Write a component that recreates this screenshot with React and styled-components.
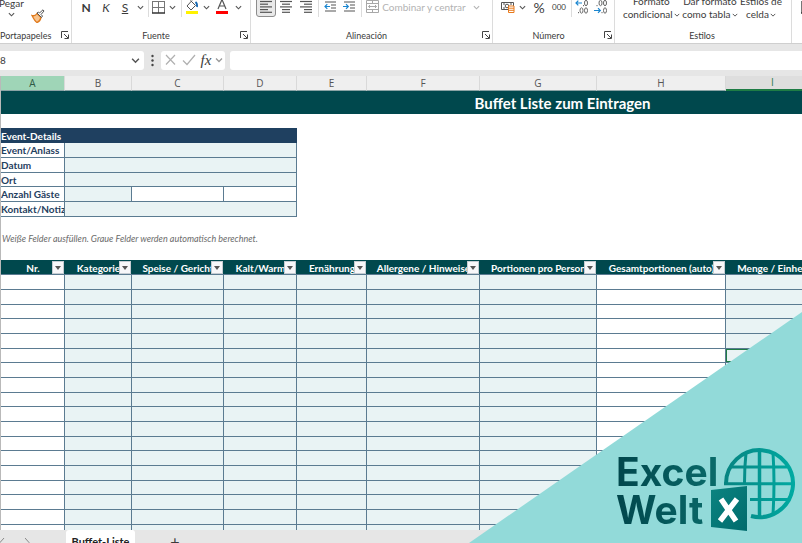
import React from 'react';
import styled, { createGlobalStyle, css } from 'styled-components';

const colors = {
  petrol: '#00484d',
  navy: '#1f4060',
  line: '#5b7b91',
  input: '#e9f3f4',
  chrome: '#e6e6e6',
  text: '#3b3b3b',
  green: '#1e7c45',
  mint: '#92dad9',
};

const GlobalStyle = createGlobalStyle`
  * { box-sizing: border-box; }
  body { margin: 0; overflow: hidden; }
  button, input { font: inherit; color: inherit; border: 0; padding: 0; background: none; }
`;

const Page = styled.div`
  position: relative;
  display: flex;
  flex-direction: column;
  height: 100vh;
  overflow: hidden;
  background: #fff;
  color: ${colors.text};
  font-family: Lato, 'Open Sans', sans-serif;
  font-size: 9px;
`;

/* Ribbon */

const Ribbon = styled.header`
  display: flex;
  align-items: flex-end;
  height: 44px;
  flex: none;
  overflow: hidden;
  background: #fff;
  border-bottom: 1px solid #cfcfcf;
`;

const Group = styled.section`
  display: flex;
  flex-direction: column;
  justify-content: flex-end;
  flex: ${({ $width }) => ($width ? `0 0 ${$width}px` : '1')};
  height: 60px;
  padding-bottom: 1px;
  border-right: 1px solid #dcdcdc;
`;

const Tools = styled.div`
  display: flex;
  align-items: center;
  height: 20px;
  margin-bottom: 11px;
  padding-left: ${({ $left = 4 }) => $left}px;
`;

const Tool = styled.button`
  display: flex;
  align-items: center;
  justify-content: center;
  flex: none;
  width: ${({ $width = 20 }) => $width}px;
  height: 20px;
  gap: 3px;
  font-size: ${({ $size = 12 }) => $size}px;
  white-space: nowrap;
  ${({ $active }) => $active && css`
    background: #e9e9e9;
    border: 1px solid #8d8d8d;
    border-radius: 3px;
  `}
  ${({ disabled }) => disabled && 'color: #b3b3b3;'}
`;

const Divider = styled.span`
  width: 1px;
  height: 20px;
  margin: 0 2px;
  background: #dcdcdc;
`;

const GroupFooter = styled.div`
  display: flex;
  align-items: center;
  height: 14px;
  padding-right: 2px;
`;

const GroupLabel = styled.span`
  flex: 1;
  text-align: ${({ $align = 'center' }) => $align};
  white-space: nowrap;
`;

const Launcher = styled.button`
  display: flex;
  width: 8px;
  height: 8px;
`;

const PasteTools = styled.div`
  display: flex;
  align-items: flex-end;
  gap: 8px;
  margin-bottom: 2px;
`;

const PasteButton = styled.button`
  display: flex;
  flex-direction: column;
  align-items: center;
  gap: 2px;
  width: 23px;
  font-size: 10px;
  line-height: 12px;
  padding-bottom: 8px;
`;

const IconStack = styled.div`
  display: flex;
  flex-direction: column;
`;

const StyleTools = styled.div`
  display: flex;
  justify-content: space-between;
  margin-bottom: 7px;
  padding: 0 9px 0 8px;
`;

const StyleButton = styled.button`
  font-size: 10px;
  line-height: 13px;
  white-space: nowrap;
  text-align: center;

  svg { margin-left: 1px; }
`;

/* Formula bar */

const FormulaBar = styled.div`
  display: flex;
  align-items: center;
  flex: none;
  height: 32px;
  background: ${colors.chrome};
`;

const WhiteBox = styled.div`
  display: flex;
  align-items: center;
  justify-content: space-between;
  width: ${({ $width }) => $width}px;
  height: 19px;
  padding-right: ${({ $pad = 2 }) => $pad}px;
  background: #fff;
  border-radius: ${({ $radius = '3px' }) => $radius};
`;

const NameInput = styled.input`
  width: 100px;
  font-size: 10px;
`;

const FormulaInput = styled.input`
  flex: 1;
  min-width: 0;
  height: 19px;
  margin-left: 5px;
  background: #fff;
  border-radius: 3px 0 0 3px;
`;

const FxLabel = styled.button`
  font: italic 15px 'Liberation Serif', serif;
`;

/* Sheet */

const SheetArea = styled.main`
  flex: 1;
  min-height: 0;
  overflow: hidden;
  border-left: 1px solid #b9b9b9;
`;

const Sheet = styled.table`
  table-layout: fixed;
  width: max(100%, 1123px);
  border-collapse: separate;
  border-spacing: 0;
  font-size: 10px;
  line-height: 12px;
  color: ${colors.navy};

  td, th { padding: 0; overflow: hidden; white-space: nowrap; }
`;

const Letter = styled.th`
  height: 15px;
  font: 10px/13px 'Open Sans', sans-serif;
  color: #555;
  background: #efefef;
  border-right: 1px solid #d9d9d9;
  border-bottom: 1px solid #8aa3a5;
  ${({ $tone }) => $tone === 'row' && 'background: #9fd5b7; color: #2f5a45;'}
  ${({ $tone }) => $tone === 'active' && `
    background: #dedede;
    color: ${colors.green};
    border-bottom: 2px solid ${colors.green};
  `}
`;

const Title = styled.td`
  height: 23px;
  background: ${colors.petrol};
  color: #fff;
  font-size: 15px;
  font-weight: 700;
  line-height: 20px;
  text-align: center;
`;

const Spacer = styled.td`
  height: ${({ $height }) => $height}px;
`;

const EventHead = styled.th`
  height: 15px;
  background: ${colors.navy};
  color: #fff;
  text-align: left;
`;

const rowHeight = ({ $index }) => ($index % 3 === 2 ? 14 : 15);

const EventLabel = styled.th`
  height: ${rowHeight}px;
  text-align: left;
  border-right: 1px solid ${colors.line};
  border-bottom: 1px solid ${colors.line};
`;

const Cell = styled.td`
  height: ${rowHeight}px;
  background: ${({ $filled }) => ($filled ? colors.input : '#fff')};
  border-right: 1px solid ${colors.line};
  border-bottom: 1px solid ${colors.line};
  ${({ $active }) => $active && `box-shadow: inset 1px 1px ${colors.green}, inset 0 -1px ${colors.green};`}
`;

const Note = styled.td`
  height: 15px;
  padding-left: 1px !important;
  font-size: 9px;
  font-style: italic;
  color: #6b6b6b;
`;

const HeadCell = styled.th`
  position: relative;
  height: 15px;
  background: ${colors.petrol};
  color: #fff;
  border-bottom: 1px solid ${colors.line};
`;

const HeadText = styled.div`
  display: flex;
  justify-content: center;
  padding-top: 1px;
`;

const FilterButton = styled.button`
  position: absolute;
  top: 1px;
  right: 1px;
  display: flex;
  align-items: center;
  justify-content: center;
  width: 12px;
  height: 13px;
  background: #f7f7f9;
  border: 1px solid #c5ccd2;
`;

/* Sheet tabs */

const TabBar = styled.nav`
  display: flex;
  flex: none;
  height: 13px;
  overflow: hidden;
  background: ${colors.chrome};
`;

const TabArrows = styled.div`
  display: flex;
  justify-content: space-between;
  width: 66px;
  padding: 8px 36px 0 0;
`;

const Tab = styled.button`
  width: 69px;
  height: 24px;
  background: #fff;
  border-radius: 3px 3px 0 0;
  font: 700 11px/22px Lato, sans-serif;
  color: #222;
`;

const AddTab = styled.button`
  width: 80px;
  height: 22px;
  line-height: 22px;
  font-size: 16px;
`;

/* Brand corner */

const Corner = styled.aside`
  position: absolute;
  right: 0;
  bottom: 0;
  width: 333px;
  height: 231px;
  background: ${colors.mint};
  clip-path: polygon(100% 0, 100% 100%, 0 100%);
`;

const Brand = styled.div`
  position: absolute;
  right: 6px;
  bottom: 11px;
  display: flex;
`;

const BrandName = styled.div`
  position: absolute;
  right: 76px;
  bottom: 3px;
  width: 104px;
  font: 700 39px/38px Inter, sans-serif;
  color: transparent;
  background: linear-gradient(90deg, #00464c, #0a6c6b);
  background-clip: text;
`;

const Chevron = ({ size = 7, color = '#555' }) => (
  <svg width={size} height={size} viewBox="0 0 8 8" fill="none" stroke={color} strokeWidth="1.3">
    <path d="M1 2.5l3 3 3-3" />
  </svg>
);

const LauncherIcon = () => (
  <svg width="8" height="8" viewBox="0 0 8 8" fill="none" stroke="#444">
    <path d="M.5 7V.5H7M3 3l4 4M7.5 3.5v4h-4" />
  </svg>
);

const LinesIcon = ({ rows }) => (
  <svg width="14" height="14" viewBox="0 0 14 14" stroke="#555" strokeWidth="1.2">
    {rows.map(([x1, x2], i) => (
      <path key={i} d={`M${x1} ${1.5 + i * 2.7}H${x2}`} />
    ))}
  </svg>
);

const IndentIcon = ({ flip }) => (
  <svg width="13" height="14" viewBox="0 0 13 14" fill="none" stroke="#555" strokeWidth="1.2">
    <path d="M1 2h11M7 5h5M7 8h5M1 11h11" />
    <path d={flip ? 'M0 6.5h5M3 4.2l2.3 2.3L3 8.8' : 'M1 6.5h5M3.3 4.2L1 6.5l2.3 2.3'} stroke="#1a86d0" />
  </svg>
);

const BordersIcon = () => (
  <svg width="13" height="13" viewBox="0 0 13 13" fill="none" stroke="#777">
    <path d="M.5 0v12M12.5 0v12M6.5 0v12M0 .5h13M0 6.5h13" />
    <path d="M0 12h13" stroke="#333" strokeWidth="1.5" />
  </svg>
);

const FillIcon = () => (
  <svg width="14" height="16" viewBox="0 0 14 16" fill="none" stroke="#555">
    <path d="M5.5 1.5l5 5-4.5 4.5-4-4 5-5.5" />
    <path d="M10.5 3q2 1.5 1.5 5" stroke="#1769b3" strokeWidth="1.8" />
    <path d="M1 13.500h12" stroke="#fff200" strokeWidth="3" />
  </svg>
);

const FontColorIcon = () => (
  <svg width="14" height="16" viewBox="0 0 14 16" fill="none" stroke="#555">
    <path d="M3 10L7 .5 11 10M4.3 7h5.4" strokeWidth="1.2" />
    <path d="M1 13.5h12" stroke="#f00" strokeWidth="3" />
  </svg>
);

const MergeIcon = () => (
  <svg width="13" height="14" viewBox="0 0 13 14" fill="none" stroke="#a8a8a8">
    <path d="M.5.5h12v12H.5zM.5 3.5h12M.5 9.5h12M6.5.5v3M6.5 9.5v3M2.5 6.5h8M4 5L2.5 6.5 4 8M9 5l1.5 1.5L9 8" />
  </svg>
);

const CurrencyIcon = () => (
  <svg width="14" height="14" viewBox="0 0 14 14" fill="none" stroke="#555">
    <path d="M.5 2.5h12v7H.5z" />
    <circle cx="6" cy="6" r="1.8" />
    <path d="M2 4h2M2 8h2M9 4h2" />
    <path d="M7.5 6h5.5v6.5H7.5z" fill="#fff" stroke="#e87a1d" />
    <path d="M7.5 8.2h5.5M7.5 10.3h5.5" stroke="#e87a1d" />
  </svg>
);

const DecimalIcon = ({ less }) => (
  <svg width="14" height="16" viewBox="0 0 14 16" fill="none" stroke="#666">
    <ellipse cx="11" cy="4" rx="1.5" ry="2.7" />
    <ellipse cx="11" cy="11.5" rx="1.5" ry="2.7" />
    <ellipse cx="6.5" cy={less ? 4 : 11.5} rx="1.5" ry="2.7" />
    <path d={less ? 'M3 6v1.2M8 13v1.2' : 'M3.5 13v1.2M8.5 6v1.2'} />
    <path
      d={less ? 'M0 11.5h6M4 9.2l2.3 2.3L4 13.8' : 'M1 4h6M3.3 1.7L1 4l2.3 2.3'}
      stroke="#1a86d0"
      strokeWidth="1.2"
    />
  </svg>
);

const CopyIcon = () => (
  <svg width="14" height="10" viewBox="0 0 14 10" fill="none" stroke="#555">
    <path d="M2 0v5h3M5.5 0v7.5h6V0" />
  </svg>
);

const BrushIcon = () => (
  <svg width="14" height="14" viewBox="0 0 14 14" fill="none" stroke="#555">
    <path d="M1 6.5q3 1 5-2l4 4q-1 4-4 5-2-1-5-7z" fill="#f9c48d" stroke="#e07a1c" strokeWidth="1.3" />
    <path d="M6 4l4.5 4.5 1-1.5L10 5.5 13 2 12 .8 8.5 4 7.5 3z" fill="#fff" />
  </svg>
);

const Globe = () => (
  <svg width="88" height="86" viewBox="0 0 88 86" fill="none">
    <defs>
      <linearGradient id="globe" gradientUnits="userSpaceOnUse" x1="16" x2="87" y1="0" y2="0">
        <stop offset="0" stopColor="#078481" />
        <stop offset="1" stopColor="#00aaa2" />
      </linearGradient>
      <linearGradient id="tile" x1="0" x2="1" y1="0" y2="1">
        <stop offset="0" stopColor="#0b8481" />
        <stop offset="1" stopColor="#006b6c" />
      </linearGradient>
    </defs>
    <g stroke="url(#globe)" strokeWidth="3">
      <path d="M18 38A33.5 33.5 0 1 1 43 70" strokeWidth="4" />
      <path d="M24 21h55M16 37.8h69M42 53.500h40" />
      <path d="M38 7q-1.500 14-1.500 30M65 7q1 15 1 30t-1 31" />
      <path d="M51.5 4v68" strokeWidth="3.5" />
    </g>
    <path d="M3 44l36-4v45l-36-4z" fill="url(#tile)" />
    <path d="M13 53l15 22M29 53L12 75" stroke="#fff" strokeWidth="5.5" />
  </svg>
);

const columns = [
  { letter: 'A', width: 64, head: 'Nr.' },
  { letter: 'B', width: 67, head: 'Kategorie', filled: true },
  { letter: 'C', width: 92, head: 'Speise / Gericht', filled: true },
  { letter: 'D', width: 73, head: 'Kalt/Warm', filled: true },
  { letter: 'E', width: 70, head: 'Ernährung', filled: true },
  { letter: 'F', width: 113, head: 'Allergene / Hinweise', filled: true },
  { letter: 'G', width: 117, head: 'Portionen pro Person', filled: true },
  { letter: 'H', width: 129, head: 'Gesamtportionen (auto)' },
  { letter: 'I', width: 94, head: 'Menge / Einheit', filled: true },
];

const eventFields = ['Event/Anlass', 'Datum', 'Ort', 'Anzahl Gäste', 'Kontakt/Notiz'];
const bodyRows = Array.from({ length: 18 }, (_, i) => i);
const ACTIVE_ROW = 5;

const ALIGN_LEFT = [[1, 13], [1, 9], [1, 13], [1, 9], [1, 13]];
const ALIGN_CENTER = [[1, 13], [3, 11], [1, 13], [3, 11], [3, 11]];
const ALIGN_RIGHT = [[1, 13], [5, 13], [1, 13], [5, 13], [5, 13]];

const Footer = ({ label, align, launcher = true }) => (
  <GroupFooter>
    <GroupLabel $align={align}>{label}</GroupLabel>
    {launcher && <Launcher aria-label={label}><LauncherIcon /></Launcher>}
  </GroupFooter>
);

const ChevronTool = ({ width = 12 }) => (
  <Tool $width={width} aria-label="Más"><Chevron /></Tool>
);

const RibbonBar = () => (
  <Ribbon>
    <Group $width={72}>
      <PasteTools>
        <PasteButton>Pegar<Chevron /></PasteButton>
        <IconStack>
          <Tool $width={14} aria-label="Copiar"><CopyIcon /></Tool>
          <Tool $width={14} aria-label="Copiar formato"><BrushIcon /></Tool>
        </IconStack>
      </PasteTools>
      <Footer label="Portapapeles" align="left" />
    </Group>
    <Group $width={179}>
      <Tools>
        <Tool><b>N</b></Tool>
        <Tool><i>K</i></Tool>
        <Tool $width={18}><u>S</u></Tool>
        <ChevronTool />
        <Divider />
        <Tool $width={14} aria-label="Bordes"><BordersIcon /></Tool>
        <ChevronTool width={14} />
        <Divider />
        <Tool $width={16} aria-label="Color de relleno"><FillIcon /></Tool>
        <ChevronTool />
        <Tool aria-label="Color de fuente"><FontColorIcon /></Tool>
        <ChevronTool />
      </Tools>
      <Footer label="Fuente" />
    </Group>
    <Group $width={242}>
      <Tools $left={5}>
        <Tool $active aria-label="Izquierda"><LinesIcon rows={ALIGN_LEFT} /></Tool>
        <Tool aria-label="Centrar"><LinesIcon rows={ALIGN_CENTER} /></Tool>
        <Tool aria-label="Derecha"><LinesIcon rows={ALIGN_RIGHT} /></Tool>
        <Divider />
        <Tool $width={18} aria-label="Disminuir sangría"><IndentIcon /></Tool>
        <Tool aria-label="Aumentar sangría"><IndentIcon flip /></Tool>
        <Divider />
        <Tool $width={104} $size={10} disabled><MergeIcon />Combinar y centrar</Tool>
        <Tool $width={16} disabled aria-label="Más"><Chevron color="#b3b3b3" /></Tool>
      </Tools>
      <Footer label="Alineación" />
    </Group>
    <Group $width={122}>
      <Tools $left={8}>
        <Tool $width={14} aria-label="Moneda"><CurrencyIcon /></Tool>
        <ChevronTool width={14} />
        <Tool $size={14}>%</Tool>
        <Tool $size={8}>000</Tool>
        <Divider />
        <Tool $width={16} aria-label="Aumentar decimales"><DecimalIcon /></Tool>
        <Tool $width={22} aria-label="Disminuir decimales"><DecimalIcon less /></Tool>
      </Tools>
      <Footer label="Número" />
    </Group>
    <Group $width={177}>
      <StyleTools>
        <StyleButton>Formato<br />condicional<Chevron size={6} /></StyleButton>
        <StyleButton>Dar formato<br />como tabla<Chevron size={6} /></StyleButton>
        <StyleButton>Estilos de<br />celda<Chevron size={6} /></StyleButton>
      </StyleTools>
      <Footer label="Estilos" launcher={false} />
    </Group>
    <Group>
      <Tools $left={8}>
        <Tool $width={14} aria-label="Insertar"><BordersIcon /></Tool>
      </Tools>
      <Footer launcher={false} />
    </Group>
  </Ribbon>
);

const FormulaRow = () => (
  <FormulaBar>
    <WhiteBox $width={144} $pad={4} $radius="0 3px 3px 0">
      <NameInput aria-label="Cuadro de nombres" defaultValue="8" />
      <Chevron size={9} />
    </WhiteBox>
    <svg width="17" height="13" viewBox="0 0 17 13" fill="#444">
      <circle cx="8.5" cy="2" r="1.2" />
      <circle cx="8.5" cy="6.5" r="1.2" />
      <circle cx="8.5" cy="11" r="1.2" />
    </svg>
    <WhiteBox $width={64}>
      <svg width="36" height="14" viewBox="0 0 36 14" fill="none" stroke="#b0b0b0" strokeWidth="1.2">
        <path d="M5 2l9 9.5M14 2l-9 9.5M22 7.5l4 4L34 2" />
      </svg>
      <FxLabel>fx</FxLabel>
      <Chevron size={8} color="#999" />
    </WhiteBox>
    <FormulaInput aria-label="Barra de fórmulas" />
  </FormulaBar>
);

const EventRow = ({ label, index }) => (
  <tr>
    <EventLabel $index={index}>{label}</EventLabel>
    {label === 'Anzahl Gäste' ? (
      <>
        <Cell $index={index} $filled />
        <Cell $index={index} />
        <Cell $index={index} />
      </>
    ) : (
      <Cell $index={index} $filled colSpan={3} />
    )}
  </tr>
);

const SheetTable = () => (
  <SheetArea>
    <Sheet>
      <colgroup>
        {columns.map(({ letter, width }) => <col key={letter} style={{ width }} />)}
        <col />
      </colgroup>
      <thead>
        <tr>
          {columns.map(({ letter }) => (
            <Letter key={letter} $tone={{ A: 'row', I: 'active' }[letter]}>{letter}</Letter>
          ))}
          <Letter />
        </tr>
      </thead>
      <tbody>
        <tr><Title colSpan={10}>Buffet Liste zum Eintragen</Title></tr>
        <tr><Spacer $height={14} colSpan={10} /></tr>
        <tr><EventHead colSpan={4}>Event-Details</EventHead></tr>
        {eventFields.map((label, i) => <EventRow key={label} label={label} index={i} />)}
        <tr><Spacer $height={14} colSpan={10} /></tr>
        <tr><Note colSpan={10}>Weiße Felder ausfüllen. Graue Felder werden automatisch berechnet.</Note></tr>
        <tr><Spacer $height={14} colSpan={10} /></tr>
        <tr>
          {columns.map(({ letter, head }) => (
            <HeadCell key={letter}>
              <HeadText>{head}</HeadText>
              <FilterButton aria-label={head}>
                <svg width="6" height="4" viewBox="0 0 6 4" fill="#555"><path d="M0 0h6L3 4z" /></svg>
              </FilterButton>
            </HeadCell>
          ))}
          <HeadCell />
        </tr>
        {bodyRows.map(row => (
          <tr key={row}>
            {columns.map(({ letter, filled }) => (
              <Cell
                key={letter}
                $index={row}
                $filled={filled}
                $active={row === ACTIVE_ROW && letter === 'I'}
              />
            ))}
            <Cell $index={row} $filled />
          </tr>
        ))}
      </tbody>
    </Sheet>
  </SheetArea>
);

const App = () => (
  <Page>
    <GlobalStyle />
    <RibbonBar />
    <FormulaRow />
    <SheetTable />
    <TabBar>
      <TabArrows>
        <svg width="5" height="9" viewBox="0 0 5 9" fill="none" stroke="#888"><path d="M4 0L0 4.5 4 9" /></svg>
        <svg width="5" height="9" viewBox="0 0 5 9" fill="none" stroke="#888"><path d="M0 0l4 4.5L0 9" /></svg>
      </TabArrows>
      <Tab>Buffet-Liste</Tab>
      <AddTab>+</AddTab>
    </TabBar>
    <Corner>
      <Brand>
        <BrandName>Excel<br />Welt</BrandName>
        <Globe />
      </Brand>
    </Corner>
  </Page>
);

export default App;
